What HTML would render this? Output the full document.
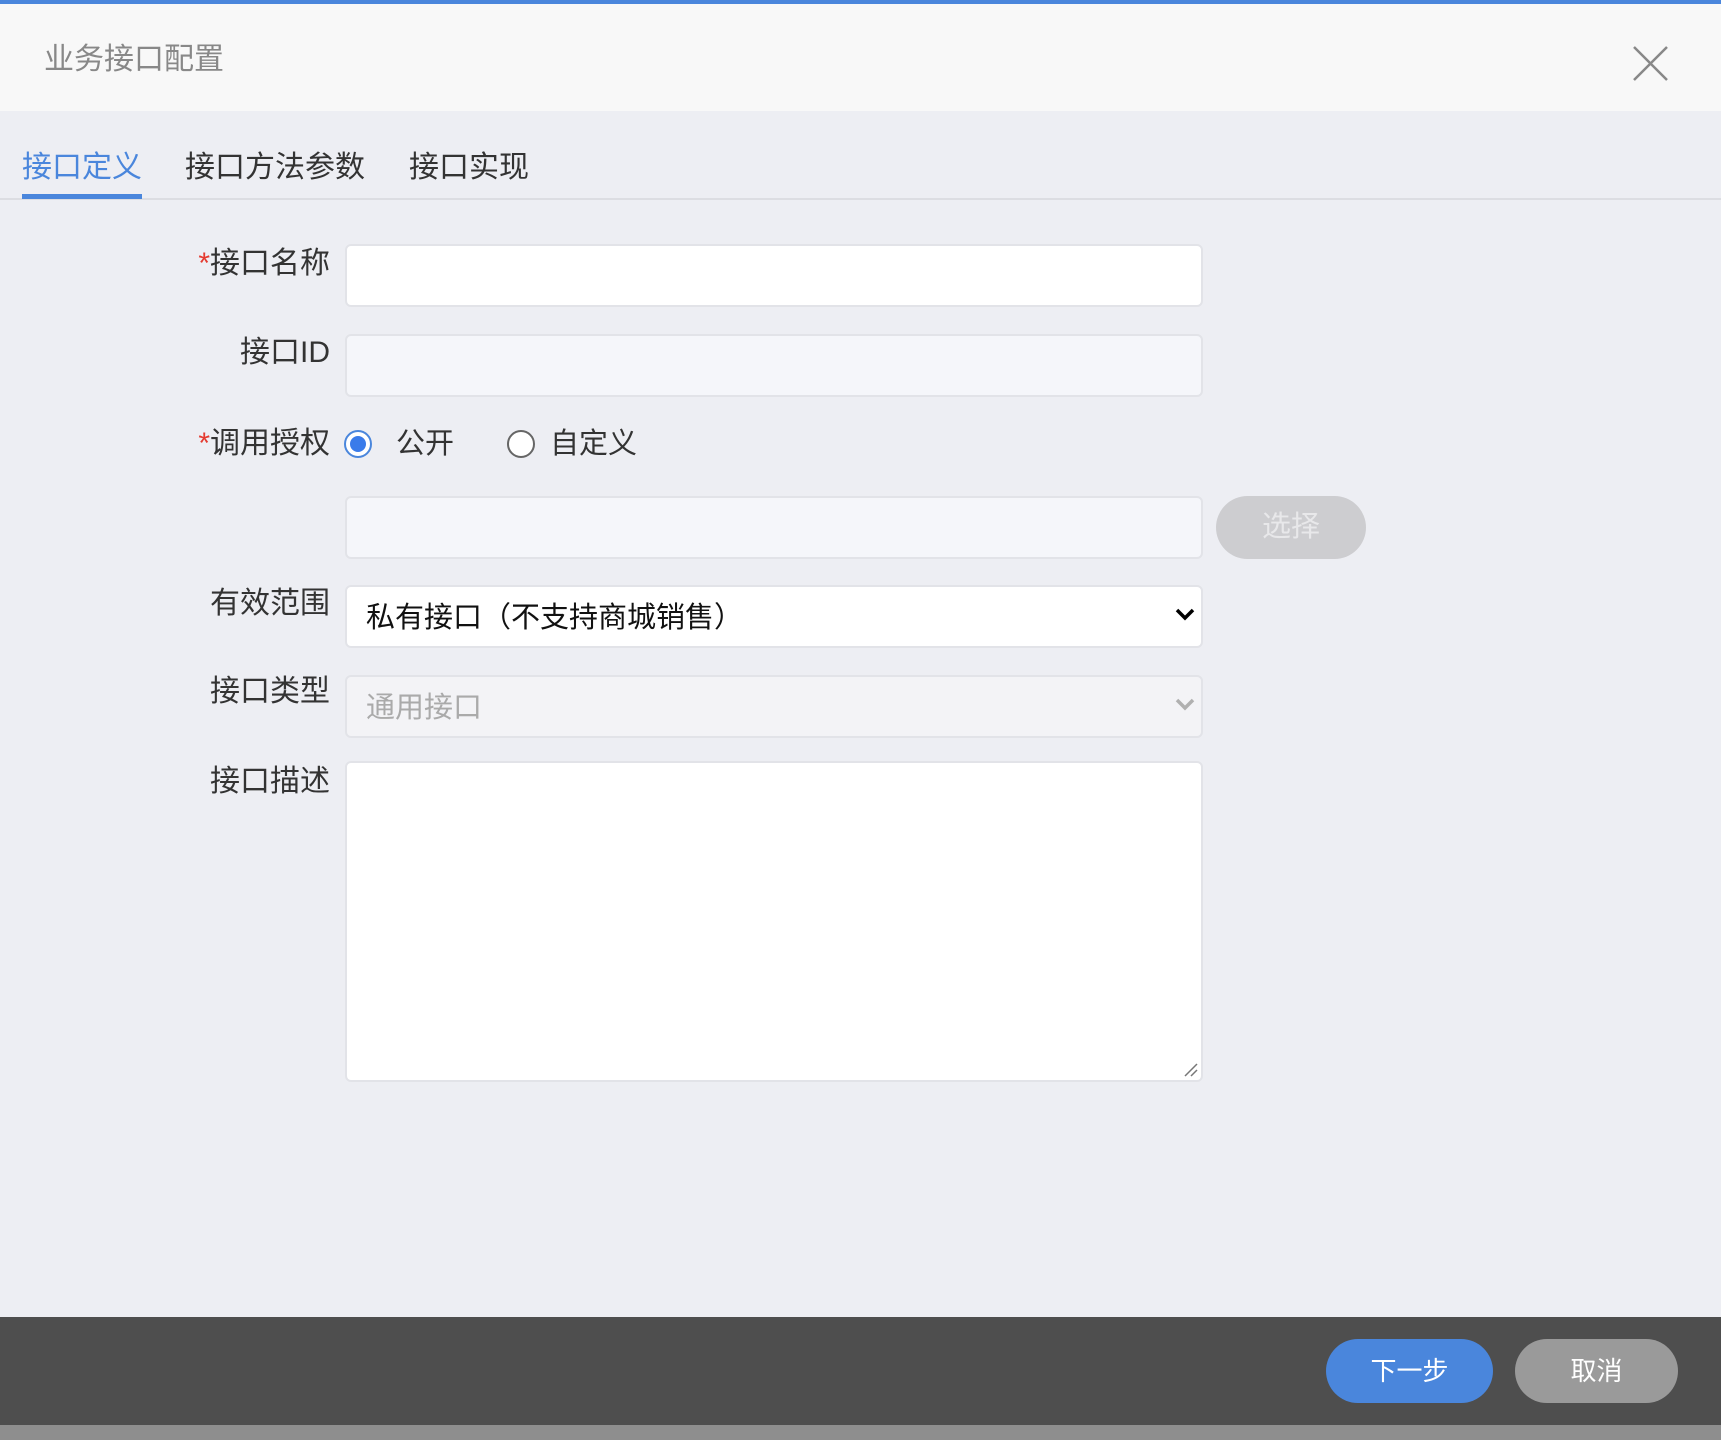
<!DOCTYPE html>
<html><head><meta charset="utf-8"><style>
*{box-sizing:border-box;margin:0;padding:0}
body{width:1721px;height:1440px;overflow:hidden;background:#edeef3;font-family:"Liberation Sans","Noto Sans CJK SC",sans-serif;position:relative;color:#333}
.a{position:absolute}
.topbar{left:0;top:0;width:1721px;height:4px;background:#4a86dc}
.hdr{left:0;top:4px;width:1721px;height:107px;background:#f8f8f8}
.title{left:44px;top:42px;font-size:30px;color:#888;line-height:36px}
.tab{top:148px;font-size:30px;line-height:40px;color:#333}
.lbl{font-size:30px;line-height:36px;color:#333;text-align:right;width:300px;left:30px}
.star{color:#e43a2f}
.inp{left:345px;width:858px;height:63px;border:2px solid #e2e3e8;border-radius:6px;background:#fff}
.dis{background:#f5f6fa}
.radio{width:28px;height:28px;border-radius:50%;border:2px solid #666;background:#fff}
.btn{border-radius:32px;color:#fff;font-size:26px;text-align:center}
</style></head><body>
<div class="a topbar"></div>
<div class="a hdr"></div>
<div class="a title">业务接口配置</div>
<svg class="a" style="left:1632px;top:45px" width="37" height="37"><path d="M2 2L35 35M35 2L2 35" stroke="#888" stroke-width="2.5"/></svg>
<div class="a tab" style="left:22px;color:#4a86dc">接口定义</div>
<div class="a tab" style="left:185px">接口方法参数</div>
<div class="a tab" style="left:409px">接口实现</div>
<div class="a" style="left:0;top:198px;width:1721px;height:2px;background:#dcdde2"></div>
<div class="a" style="left:22px;top:194px;width:120px;height:5px;background:#4a86dc"></div>

<div class="a lbl" style="top:246px"><span class="star">*</span>接口名称</div>
<div class="a inp" style="top:244px"></div>
<div class="a lbl" style="top:335px">接口ID</div>
<div class="a inp dis" style="top:334px"></div>
<div class="a lbl" style="top:426px"><span class="star">*</span>调用授权</div>
<div class="a radio" style="left:344px;top:430px;border-color:#4a86dc;padding:4px"><div style="width:16px;height:16px;border-radius:50%;background:#3a7bea"></div></div>
<div class="a" style="left:396px;top:426px;font-size:29px;line-height:36px">公开</div>
<div class="a radio" style="left:507px;top:430px"></div>
<div class="a" style="left:550px;top:426px;font-size:29px;line-height:36px">自定义</div>
<div class="a inp dis" style="top:496px"></div>
<div class="a btn" style="left:1216px;top:496px;width:150px;height:63px;background:#cdcdd0;color:#e8e8ea;line-height:63px;font-size:29px">选择</div>

<div class="a lbl" style="top:586px">有效范围</div>
<div class="a inp" style="top:585px"></div>
<div class="a" style="left:366px;top:599px;font-size:29px;line-height:38px;color:#111">私有接口（不支持商城销售）</div>
<svg class="a" style="left:1174px;top:607px" width="22" height="16"><path d="M3 3L11 11L19 3" stroke="#000" stroke-width="3.5" fill="none"/></svg>
<div class="a lbl" style="top:674px">接口类型</div>
<div class="a inp" style="top:675px;background:#f3f3f6"></div>
<div class="a" style="left:366px;top:689px;font-size:29px;line-height:38px;color:#aaa">通用接口</div>
<svg class="a" style="left:1174px;top:697px" width="22" height="16"><path d="M3 3L11 11L19 3" stroke="#b0b0b0" stroke-width="3.5" fill="none"/></svg>
<div class="a lbl" style="top:764px">接口描述</div>
<div class="a inp" style="top:761px;height:321px"></div>
<svg class="a" style="left:1183px;top:1062px" width="16" height="16"><path d="M2 14L14 2M8 14L14 8" stroke="#777" stroke-width="1.5"/></svg>

<div class="a" style="left:0;top:1317px;width:1721px;height:108px;background:#4e4e4e"></div>
<div class="a" style="left:0;top:1425px;width:1721px;height:15px;background:#8e8e8e"></div>
<div class="a btn" style="left:1326px;top:1339px;width:167px;height:64px;line-height:64px;background:#4a86dc">下一步</div>
<div class="a btn" style="left:1515px;top:1339px;width:163px;height:64px;line-height:64px;background:#9a9a9a">取消</div>
</body></html>
